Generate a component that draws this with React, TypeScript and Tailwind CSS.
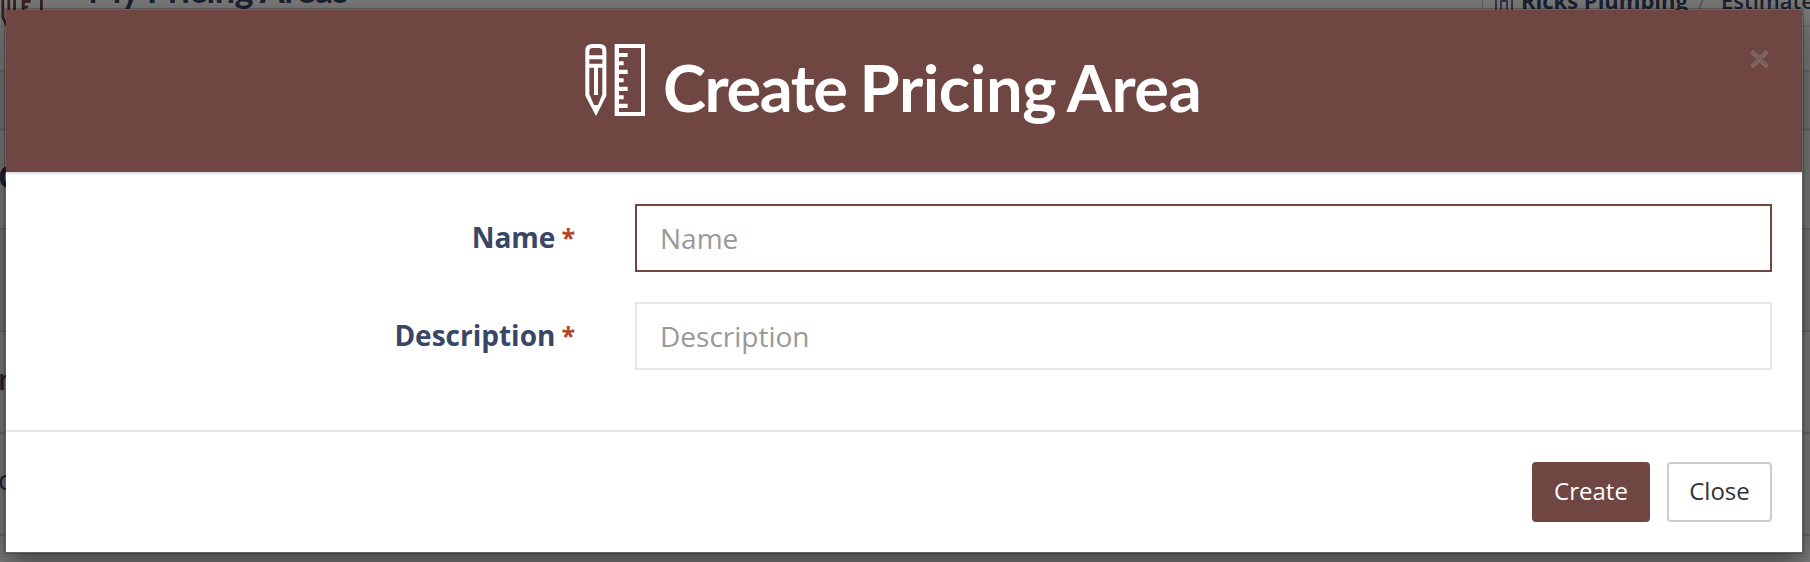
import React from 'react';

interface ToolsIconProps {
  className?: string;
}

function ToolsIcon({ className }: ToolsIconProps) {
  return (
    <svg viewBox="45 27 180 216" className={className} fill="none" aria-hidden="true">
      {/* pencil */}
      <path
        fill="currentColor"
        fillRule="evenodd"
        d="M66 27H89Q109 27 109 47V182L78 243L46 182V47Q46 27 66 27ZM68 39Q58 39 58 49V61H97V49Q97 39 87 39ZM58 73V86H97V73ZM58 98V178L72 210H84L97 178V98H84V180H72V98Z"
      />
      {/* ruler */}
      <path
        fill="currentColor"
        fillRule="evenodd"
        d="M134 27H225V243H134ZM147 39V54H173V66H147V79H161V91H147V104H173V117H147V130H161V142H147V155H173V168H147V181H161V193H147V206H173V219H147V231H213V39Z"
      />
    </svg>
  );
}

interface FieldProps {
  label: string;
  focused?: boolean;
}

function Field({ label, focused }: FieldProps) {
  return (
    <div className="flex h-[68px] items-center">
      <label className="flex w-[569px] shrink-0 justify-end gap-[6px] pb-0.5 text-[28px] leading-10 font-bold text-[#394766]">
        <span>{label}</span>
        <span className="text-[25px] text-[#b5422f]">*</span>
      </label>
      <input
        type="text"
        placeholder={label}
        className={`ml-[60px] h-[68px] w-[1137px] border-2 bg-white px-[23px] text-[28px] outline-none placeholder:text-[#999999] ${
          focused ? 'border-[#704643]' : 'border-[#e5e6e7]'
        }`}
      />
    </div>
  );
}

function PageBehind() {
  return (
    <div className="h-[562px] overflow-hidden bg-white text-[#394766]">
      <div className="flex h-[27px] items-end border-b-2 border-[#e7eaec]">
        <div className="flex h-[36px] w-[1482px] shrink-0 -translate-y-[18px] items-center">
          <ToolsIcon className="relative top-[18px] h-[50px] w-[44px] shrink-0 text-[#704643]" />
          <span className="ml-[44px] font-['Lato'] text-[36px] leading-9 font-bold tracking-[-0.6px] whitespace-nowrap">
            My Pricing Areas
          </span>
        </div>
        <div className="flex h-[27px] items-start overflow-hidden border-l border-[#c3cbdb] pl-3 whitespace-nowrap">
          <svg viewBox="0 0 18 24" className="h-6 w-[18px] shrink-0 -translate-y-3" fill="none" stroke="currentColor" strokeWidth="1.5">
            <path d="M1 24V1H17V24M6 24V15H12V24" />
          </svg>
          <span className="ml-[8px] -translate-y-[16px] text-[22px] leading-9 font-bold">Ricks Plumbing</span>
          <span className="ml-[10px] -translate-y-[16px] text-[22px] leading-9 text-[#bbbbbb]">/</span>
          <span className="ml-[15px] -translate-y-[16px] text-[22px] leading-9 font-semibold">Estimates</span>
        </div>
      </div>
      <div className="h-[45px] border-b-2 border-[#d9dfe5]" />
      <div className="h-[59px] border-b-3 border-[#dddddd] bg-[#f5f5f5]" />
      <div className="flex h-[99px] items-center border-b-2 border-[#dddddd] text-[30px] font-bold">
        <span className="-ml-[2px] pb-[6px]">O</span>
      </div>
      <div className="h-[102px] border-b-2 border-[#dddddd] bg-[#f5f5f5]" />
      <div className="flex h-[102px] items-center border-b-2 border-[#dddddd] text-[28px] font-semibold">
        <span className="-ml-0.5 pb-[6px]">r</span>
      </div>
      <div className="flex h-[102px] items-center border-b-2 border-[#dddddd] text-[28px]">
        <span className="-ml-0.5 pb-[10px]">c</span>
      </div>
      <div className="h-[40px]" />
    </div>
  );
}

export default function App() {
  return (
    <div className="relative h-[562px] w-full overflow-hidden font-['Open_Sans','Noto_Sans',sans-serif]">
      <PageBehind />

      <div className="absolute inset-0 overflow-hidden bg-black/50 px-1 pt-2">
        <div
          role="dialog"
          className="h-[546px] w-[1800px] border-2 border-black/20 bg-white bg-clip-padding shadow-[0_10px_30px_rgba(0,0,0,0.5)]"
        >
          <header className="flex h-[164px] items-start border-b-2 border-[#dfe3ef] bg-[#704643] text-white">
            <ToolsIcon className="mt-[34px] ml-[579px] h-[72px] w-[60px] shrink-0" />
            <h4 className="ml-[18px] w-[1085px] shrink-0 pt-[37px] font-['Lato'] text-[65px] leading-[80px] font-bold tracking-[-0.4px] whitespace-nowrap [word-spacing:-2.5px]">
              <span className="tracking-[-1.4px]">Create</span> Pricing Area
            </h4>
            {/* close mark */}
            <button type="button" aria-label="Close dialog" className="mt-[38px] ml-[2px] h-[21px] w-[19px] shrink-0">
              <svg viewBox="0 0 19 21" className="h-[21px] w-[19px]" fill="none" strokeWidth="4">
                <path stroke="#94706c" d="M1.8 3.5L17.2 18.8M17.2 3.5L1.8 18.8" />
                <path stroke="#5f3b39" d="M1.8 1.3L17.2 16.7M17.2 1.3L1.8 16.7" />
                <path stroke="#7b605b" d="M1.8 2.3L17.2 17.7M17.2 2.3L1.8 17.7" />
              </svg>
            </button>
          </header>

          <div className="flex h-[256px] flex-col gap-[30px] pt-[30px]">
            <Field label="Name" focused />
            <Field label="Description" />
          </div>

          <footer className="flex h-[122px] items-start justify-end gap-[17px] border-t-2 border-[#e5e5e5] pt-[30px] pr-[30px] text-[24px]">
            <button type="button" className="h-[60px] w-[118px] rounded bg-[#704643] pb-0.5 text-white">
              Create
            </button>
            <button type="button" className="h-[60px] w-[105px] rounded border-2 border-[#cccccc] bg-white pb-0.5 text-[#333333]">
              Close
            </button>
          </footer>
        </div>
      </div>
    </div>
  );
}
